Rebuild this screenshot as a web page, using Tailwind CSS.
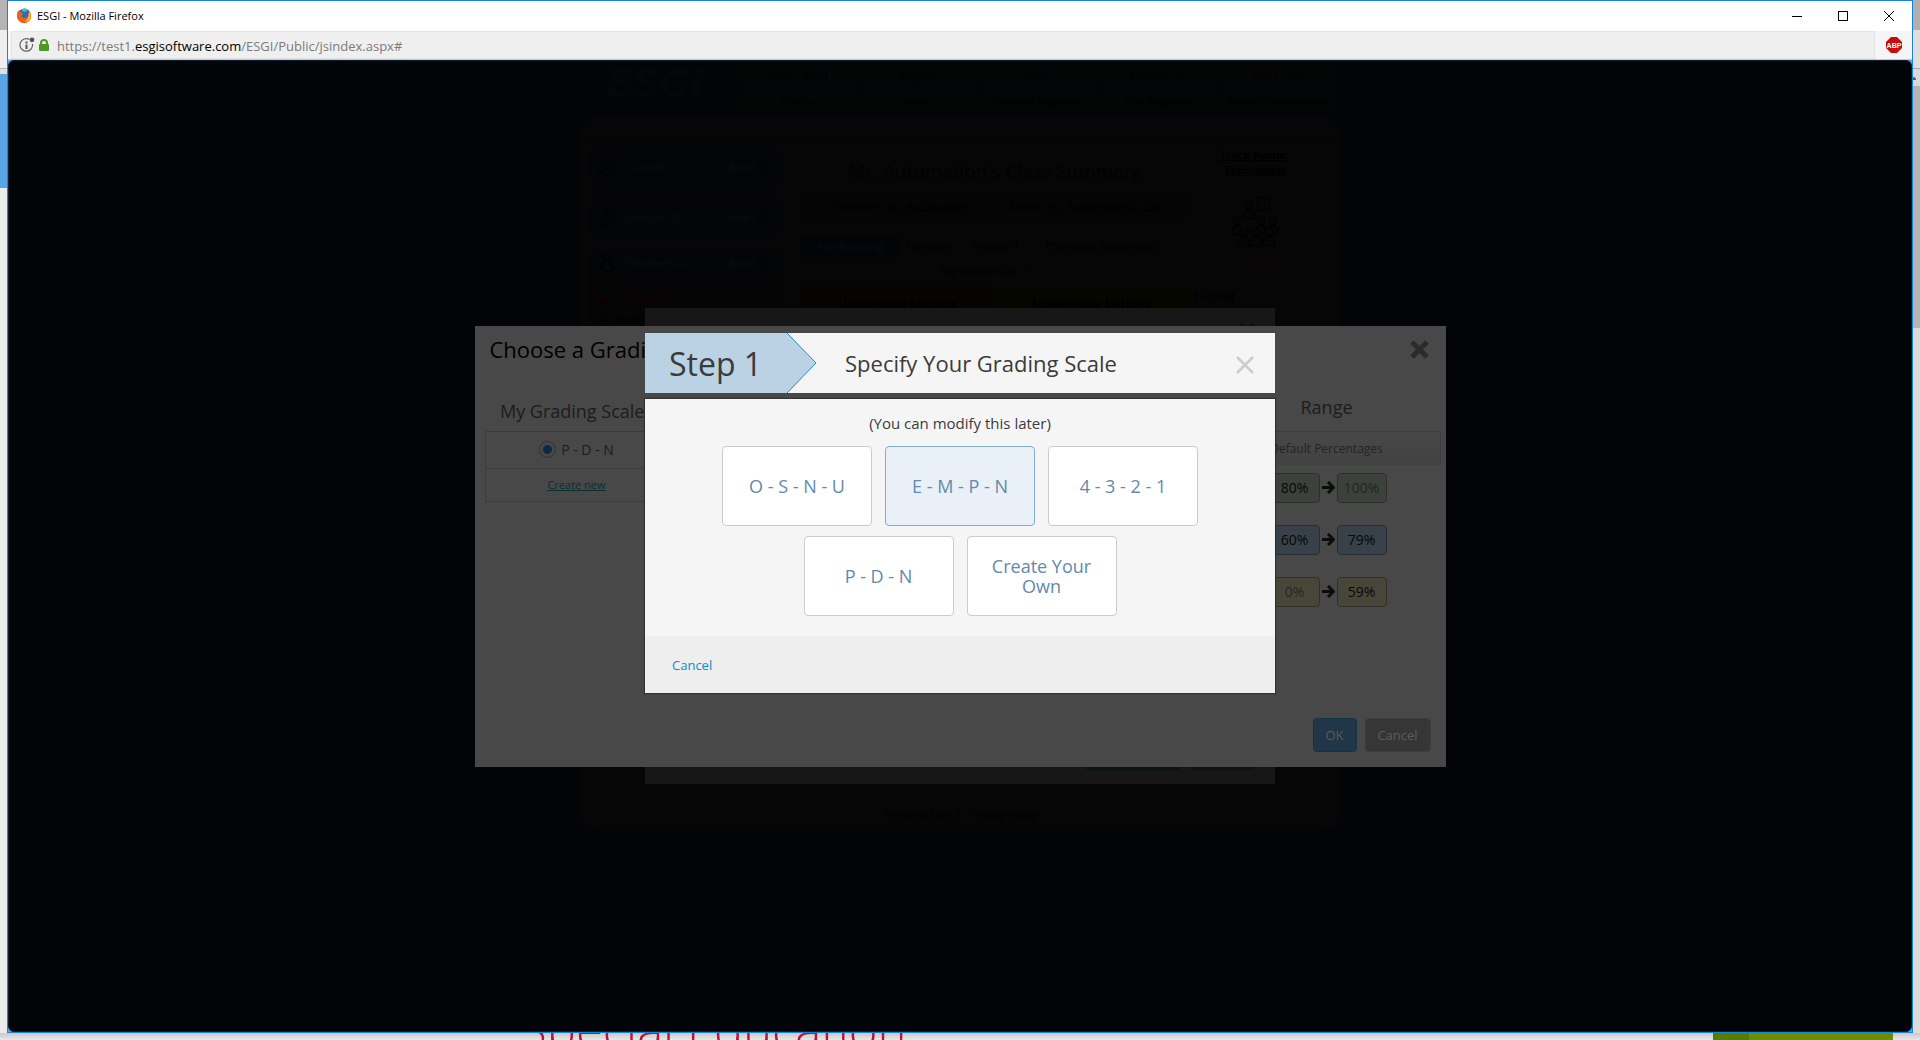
<!DOCTYPE html>
<html lang="en">
<head>
<meta charset="utf-8">
<title>ESGI - Mozilla Firefox</title>
<script src="https://cdn.jsdelivr.net/npm/@tailwindcss/browser@4"></script>
</head>
<body class="grid h-screen grid-cols-[7px_1fr_7px] grid-rows-[1fr_7px] overflow-hidden bg-[#dcdcdc] font-['Open_Sans',sans-serif]">

<!-- desktop: left edge -->
<div class="flex flex-col bg-[#ececec]">
  <div class="h-[30px] bg-[#b4b4b4]"></div>
  <div class="h-[38px] bg-[#efefef]"></div>
  <div class="h-px bg-[#b5b5b5]"></div>
  <div class="h-[5px] bg-[#e0e0e0]"></div>
  <div class="h-[114px] bg-[#5aa5e3]"></div>
</div>

<!-- browser window -->
<div class="flex min-w-0 flex-col border border-[#1883d7] bg-[#5aa5e3]">
  <div class="flex h-[30px] shrink-0 items-center bg-white pl-2">
    <svg class="size-4" viewBox="0 0 16 16" aria-hidden="true">
      <circle cx="8" cy="8" r="7" fill="#e0531b"/>
      <circle cx="8.500" cy="6" r="5.500" fill="#2a6fb4"/>
      <path d="M6 1.500Q9-.5 12 2L9 4 6 3z" fill="#4cb8e8"/>
      <path d="M1 5Q2 2 4 2Q3 4 6 5Q8 6 6 7Q5 9 8 10Q12 10 12 7L13 3Q16 6 15 10Q12 16 7 15Q1 14 1 5z" fill="#e8641c"/>
      <path d="M13 4Q16 7 14 11Q12 14 8 14Q13 12 13 4z" fill="#fcc233"/>
    </svg>
    <h1 class="ml-[5px] text-[11px] leading-4 text-black">ESGI - Mozilla Firefox</h1>
    <div class="ml-auto flex h-full items-center">
      <button class="flex h-full w-[46px] items-center justify-center" aria-label="Minimize"><svg class="size-[10px]" viewBox="0 0 10 10"><path d="M0 5.500h10" stroke="#000"/></svg></button>
      <button class="flex h-full w-[46px] items-center justify-center" aria-label="Maximize"><svg class="size-[10px]" viewBox="0 0 10 10"><rect x=".5" y=".5" width="9" height="9" fill="none" stroke="#000"/></svg></button>
      <button class="flex h-full w-[46px] items-center justify-center" aria-label="Close window"><svg class="size-[10px]" viewBox="0 0 10 10"><path d="M0 0l10 10M10 0L0 10" stroke="#000"/></svg></button>
    </div>
  </div>
  <div class="flex h-[29px] shrink-0 border-b border-[#c6c6c6] bg-[#f5f5f5] pl-[3px]">
    <div class="flex flex-1 items-center border border-[#e3e3e3] bg-[#efefef] pl-[7px]">
      <svg class="size-4" viewBox="0 0 16 16" aria-hidden="true"><path d="M10.500 2.500A6.300 6.300 0 1 0 13.500 7" fill="none" stroke="#666" stroke-width="1.200"/><circle cx="13" cy="2.800" r="2.400" fill="#555"/><path d="M7.500 4.500v2M7.500 7.500v4.500" stroke="#555" stroke-width="2"/></svg>
      <svg class="ml-1 h-3 w-[10px]" viewBox="0 0 10 12" aria-hidden="true"><rect y="5" width="10" height="7" rx="1" fill="#4d9a26"/><path d="M2 6V4a3 3 0 0 1 6 0v2" fill="none" stroke="#4d9a26" stroke-width="2"/></svg>
      <a href="#" class="ml-2 pt-[2px] text-[13px] leading-5 text-[#7b7b7b]">https://test1.<span class="text-black">esgisoftware.com</span>/ESGI/Public/jsindex.aspx#</a>
    </div>
    <button class="flex w-[37px] items-center justify-center" aria-label="Adblock Plus">
      <svg class="size-4" viewBox="0 0 16 16"><path d="M5 0h6l5 5v6l-5 5H5l-5-5V5z" fill="#c70d0e"/><text x="8" y="11" text-anchor="middle" font-size="7" font-weight="700" font-family="Liberation Sans, sans-serif" fill="#fff">ABP</text></svg>
    </button>
  </div>

  <!-- page content -->
  <div class="relative min-h-0 flex-1 overflow-hidden rounded-md border border-[#0d2030] bg-[#020407] text-[11px] leading-4 text-[#010101]">

    <div class="mx-auto w-[760px] pt-1">
      <div class="flex h-[52px] justify-between pr-[5px] pl-[26px]">
        <div class="font-['DejaVu_Sans'] text-[38px] leading-9 font-bold text-[#040608] italic">ESGI</div>
        <nav class="grid h-[46px] grid-cols-5 gap-x-[5px] gap-y-[7px] text-center">
          <a href="#" class="h-[19px] w-[115px] rounded bg-[#040505] leading-5">2017 - 2018</a>
          <a href="#" class="h-[19px] w-[115px] rounded bg-[#040505] leading-5">Logout</a>
          <a href="#" class="h-[19px] w-[115px] rounded bg-[#040505] leading-5">Help</a>
          <a href="#" class="h-[19px] w-[115px] rounded bg-[#040505] leading-5">Contact Us</a>
          <a href="#" class="h-[19px] w-[115px] rounded bg-[#040505] leading-5"><i class="mr-2 text-sm leading-5 text-[#050102]">CMT</i>Go</a>
          <a href="#" class="h-[19px] w-[115px] rounded bg-[#040505] leading-5">Profile</a>
          <a href="#" class="h-[19px] w-[115px] rounded bg-[#040505] leading-5">Home</a>
          <a href="#" class="h-[19px] w-[115px] rounded bg-[#040505] leading-5">Student Explorer</a>
          <a href="#" class="h-[19px] w-[115px] rounded bg-[#040505] leading-5">Test Explorer</a>
          <a href="#" class="h-[19px] w-[115px] rounded bg-[#040505] leading-5">Parent Conferencer</a>
        </nav>
      </div>
      <main class="flex h-[714px] flex-col rounded-[20px] bg-[#060606]">
        <div class="h-[20px] shrink-0 border-b border-[#030303]"></div>
        <div class="flex flex-1 pr-5 pl-[10px]">
          <aside class="flex w-[190px] flex-col gap-[10px] pt-[10px] text-[#060a0e]">
            <div class="flex h-10 items-center gap-2 rounded-xl bg-[#030508] px-2 font-bold">
              <svg class="size-5" viewBox="0 0 20 20" fill="none" stroke="#000"><circle cx="10" cy="4" r="3"/><circle cx="4" cy="12" r="3"/><circle cx="15" cy="12" r="3"/><path d="M1 19q3-6 6 0M12 19q3-6 6 0M7 11q3-6 6 0"/></svg>
              <span>Classes (1)</span><a href="#" class="ml-auto">Add</a><span class="size-[14px] bg-[#010504]"></span>
            </div>
            <div class="flex h-10 items-center gap-2 rounded-xl bg-[#030508] px-2 font-bold">
              <svg class="size-5" viewBox="0 0 20 20" fill="none" stroke="#000"><circle cx="12" cy="4" r="3"/><circle cx="6" cy="10" r="3"/><path d="M2 19q4-9 8 0zM9 14q4-9 8 0z"/></svg>
              <span>Groups (0)</span><a href="#" class="ml-auto">Add</a><span class="size-[14px] bg-[#010504]"></span>
            </div>
            <div class="rounded-xl bg-[#050505]">
              <div class="flex h-[31px] items-center gap-2 rounded-t-xl bg-[#030508] px-2 font-bold">
                <svg class="size-5" viewBox="0 0 20 24" fill="none" stroke="#000" stroke-width="1.500"><circle cx="9" cy="5" r="4"/><path d="M2 20Q2 9 9 9T16 20Q9 25 2 20z"/></svg>
                <span>Students (4)</span><a href="#" class="ml-auto">Add</a><span class="size-[14px] bg-[#010504]"></span>
              </div>
              <ul class="px-[10px] pt-[14px] leading-[18px] text-[#010101]">
                <li class="flex items-center gap-2 font-bold text-[#0c0101]"><span class="size-[7px] bg-[#0a0000]"></span>All Students</li>
                <li class="flex items-center gap-2"><span class="size-[6px] border border-[#010101]"></span>Rocky</li>
              </ul>
            </div>
          </aside>
          <section class="ml-5 flex w-[389px] flex-col pt-5">
            <h2 class="text-center text-[19px] leading-7 text-[#000203]">Mr. Automation's Class Summary</h2>
            <div class="mt-2 flex h-[26px] items-center justify-between bg-[#050505] pr-6 pl-8">
              <span><b>Teacher:</b> <a href="#" class="ml-1 underline">Mr. Automation</a></span>
              <span><b>Class:</b> <a href="#" class="ml-1 underline">Mr. Automation's Class</a></span>
            </div>
            <div class="mt-4 grid h-[22px] grid-cols-[99px_61px_70px_1fr] items-center pr-[18px] text-center">
              <a href="#" class="bg-[#020408] leading-[22px] font-bold text-[#060a10]">Pre-Reading</a><a href="#">Pre-Math</a><a href="#">Phonics 1</a><a href="#">Phonemic Awareness</a>
            </div>
            <div class="mt-1 h-[22px] pr-[18px] text-center leading-5"><a href="#">Sight Words Gr. 1</a></div>
            <div class="mt-1 grid h-8 grid-cols-2 text-center text-[13px] leading-8 font-bold"><a href="#" class="bg-[#070300] text-black">Uppercase Letters</a><a href="#" class="bg-[#060600] text-black">Lowercase Letters</a></div>
          </section>
          <section class="flex flex-1 flex-col items-center pt-[10px] text-center">
            <a href="#" class="w-[90px] leading-[15px] font-bold text-black underline">Track Name: Traditional</a>
            <svg class="mt-5 h-[50px] w-[48px]" viewBox="0 0 48 50" fill="#060505" stroke="#000"><rect x="26" y="1" width="13" height="13"/><circle cx="18" cy="8" r="4"/><path d="M12 22q0-10 6-10t6 10z"/><circle cx="6" cy="24" r="4"/><circle cx="30" cy="24" r="4"/><circle cx="42" cy="24" r="4"/><path d="M1 38q0-10 5-10t5 10zM25 38q0-10 5-10t5 10zM37 38q0-10 5-10t5 10z"/><circle cx="13" cy="35" r="4"/><circle cx="25" cy="35" r="4"/><circle cx="38" cy="35" r="4"/><path d="M7 49q0-10 6-10t6 10zM19 49q0-10 6-10t6 10zM32 49q0-10 6-10t6 10z"/></svg>
            <strong class="mt-[6px] text-[13px] text-[#080703]">Students 4</strong>
            <strong class="mt-5 self-start pl-1 font-['Liberation_Serif'] text-[13px]">Legend</strong>
          </section>
        </div>
        <footer class="pb-[9px] text-center"><a href="#">Terms of Use</a> &nbsp;|&nbsp; <a href="#">Privacy Policy</a></footer>
      </main>
    </div>

    <!-- grade dialog, furthest back -->
    <div class="absolute inset-0 flex items-center justify-center">
      <section class="flex h-[476px] w-[630px] flex-col justify-between bg-[#171717] px-5 py-[14px]">
        <div class="flex items-start justify-between text-[20px] leading-6 text-[#030303]"><h2>Choose Grade Range</h2><svg class="mt-[1px] size-4" viewBox="0 0 16 16"><path d="M1 1l14 14M15 1L1 15" stroke="#101010" stroke-width="4"/></svg></div>
        <div class="flex justify-end gap-[10px] text-[13px]"><button class="h-[34px] w-[96px] rounded bg-[#08131a]">Run Report</button><button class="h-[34px] w-[64px] rounded bg-[#111]">Cancel</button></div>
      </section>
    </div>

    <!-- grading scale dialog -->
    <div class="absolute inset-0 flex items-center justify-center">
      <section class="flex h-[441px] w-[971px] flex-col bg-[#484848]">
        <header class="flex items-start justify-between pt-2 pr-[17px] pb-px pl-[15px]">
          <h2 class="text-[22px] leading-[30px] text-black">Choose a Grading Scale</h2>
          <button class="pt-[6px]" aria-label="Close dialog"><svg class="size-[19px]" viewBox="0 0 19 19"><path d="M2 2l15 15M17 2L2 17" stroke="#2b2b2b" stroke-width="5"/></svg></button>
        </header>
        <div class="flex flex-1 justify-between pr-[5px] pl-[10px]">
          <div class="w-[184px] pt-[34px] text-center text-[#1c1c1c]">
            <h3 class="text-[18px] leading-6 whitespace-nowrap">My Grading Scales</h3>
            <div class="mt-2 border border-[#3c3c3c]">
              <label class="flex h-9 items-center justify-center gap-[5px] text-sm"><input type="radio" name="scale" checked class="m-0 size-[17px] appearance-none rounded-full border border-[#303036] bg-[#0d2a44] bg-clip-content p-[3px]">P - D - N</label>
              <div class="flex h-[33px] items-center justify-center border-t border-[#3c3c3c] text-[11px]"><a href="#" class="text-[#0b2c30] underline">Create new</a></div>
            </div>
          </div>
          <div class="w-[228px] pt-[30px] text-center">
            <h3 class="text-[18px] leading-6 text-[#1c1c1c]">Range</h3>
            <div class="mt-3 h-[34px] border border-b-0 border-[#3e3e3e] bg-linear-to-b from-[#484848] to-[#424242] text-xs leading-[33px] text-[#242424]">Default Percentages</div>
            <div class="mt-2 flex flex-col items-center gap-[22px] pl-[3px] text-sm text-[#080808]">
              <div class="flex items-center gap-[2px]"><input aria-label="P from" value="80%" class="h-[30px] w-[50px] rounded-sm border border-[#2c302c] bg-[#3c423b] text-center"><svg class="size-[13px]" viewBox="0 0 13 13"><path d="M0 6.500h10M6 1l5.500 5.500L6 12" fill="none" stroke="#0c0c0c" stroke-width="3"/></svg><input aria-label="P to" value="100%" disabled class="h-[30px] w-[50px] rounded-sm border border-[#2c302c] bg-[#3c423b] text-center text-[#22251f]"></div>
              <div class="flex items-center gap-[2px]"><input aria-label="D from" value="60%" class="h-[30px] w-[50px] rounded-sm border border-[#2a2d30] bg-[#384149] text-center"><svg class="size-[13px]" viewBox="0 0 13 13"><path d="M0 6.500h10M6 1l5.500 5.500L6 12" fill="none" stroke="#0c0c0c" stroke-width="3"/></svg><input aria-label="D to" value="79%" class="h-[30px] w-[50px] rounded-sm border border-[#2a2d30] bg-[#384149] text-center"></div>
              <div class="flex items-center gap-[2px]"><input aria-label="N from" value="0%" disabled class="h-[30px] w-[50px] rounded-sm border border-[#302f28] bg-[#484638] text-center text-[#282720]"><svg class="size-[13px]" viewBox="0 0 13 13"><path d="M0 6.500h10M6 1l5.500 5.500L6 12" fill="none" stroke="#0c0c0c" stroke-width="3"/></svg><input aria-label="N to" value="59%" class="h-[30px] w-[50px] rounded-sm border border-[#302f28] bg-[#484638] text-center"></div>
            </div>
          </div>
        </div>
        <footer class="flex justify-end gap-2 pr-[15px] pb-[15px] text-[13px] text-[#5c5c5c]">
          <button class="h-[34px] w-11 rounded border border-[#133442] bg-[#213648]">OK</button>
          <button class="h-[34px] w-[66px] rounded border border-[#3e3e3e] bg-[#363636]">Cancel</button>
        </footer>
      </section>
    </div>

    <!-- step dialog, in front -->
    <div class="absolute inset-0 flex items-center justify-center pb-[66px]">
      <section class="flex w-[630px] flex-col gap-[6px] text-[#3b3b3b]">
        <header class="flex h-[60px] items-center bg-[#f5f5f5] pr-[21px]">
          <div class="relative flex h-full w-[172px] items-center">
            <svg class="absolute inset-0 h-full w-full" viewBox="0 0 172 60" aria-hidden="true"><path d="M0 0H142L171 30 142 60H0z" fill="#bad2e4"/><path d="M142 0L171 30 142 60" fill="none" stroke="#1a90cf"/></svg>
            <span class="relative pt-[2px] pl-6 text-[32px] leading-10">Step 1</span>
          </div>
          <h2 class="ml-7 text-[22px] leading-[30px]">Specify Your Grading Scale</h2>
          <button class="ml-auto pt-1" aria-label="Close"><svg class="size-[18px]" viewBox="0 0 18 18"><path d="M1 1l16 16M17 1L1 17" stroke="#ccc" stroke-width="2.500"/></svg></button>
        </header>
        <div class="bg-[#f5f5f5] shadow-[0_0_1px_1px_rgba(0,0,0,0.3)]">
          <p class="pt-[14px] text-center text-[15px] leading-5">(You can modify this later)</p>
          <div class="flex flex-wrap justify-center gap-x-[13px] gap-y-[10px] px-[70px] pt-[13px] pb-5 text-[18px] leading-5 text-[#6489ab]">
            <button class="h-20 w-[150px] rounded border border-[#ccc] bg-white">O - S - N - U</button>
            <button class="h-20 w-[150px] rounded border border-[#83aed1] bg-[#e9f0f7]">E - M - P - N</button>
            <button class="h-20 w-[150px] rounded border border-[#ccc] bg-white">4 - 3 - 2 - 1</button>
            <button class="h-20 w-[150px] rounded border border-[#ccc] bg-white">P - D - N</button>
            <button class="h-20 w-[150px] rounded border border-[#ccc] bg-white px-5">Create Your Own</button>
          </div>
          <footer class="flex h-[57px] items-center bg-[#eee] px-[27px] text-[13px]"><a href="#" class="text-[#0d8ad0]">Cancel</a></footer>
        </div>
      </section>
    </div>
  </div>
</div>

<!-- desktop: right edge -->
<div class="flex flex-col bg-[#dcdcdc]">
  <div class="h-[30px] bg-[#b0b0b0]"></div>
  <div class="h-[38px] bg-[#dedede]"></div>
  <div class="h-px bg-[#a8a8a8]"></div>
  <div class="h-[17px] bg-[#d8d8d8] pt-2"><div class="size-[3px] rounded-tr bg-[#555]"></div></div>
  <div class="h-[242px] bg-[#b5b5b5]"></div>
</div>

<!-- desktop: page behind the bottom edge -->
<div class="col-span-3 flex items-center justify-between overflow-hidden bg-linear-to-b from-[#c9c9c9] to-[#e8e8e8] pr-[27px] pl-5">
  <p class="pb-4 pl-[500px] font-['Open_Sans'] text-[49px] leading-[60px] font-light text-[#b81538]">Special Education</p>
  <div class="flex h-[7px] w-[180px] bg-[#6a9000]"><div class="w-9 bg-[#567c00]"></div></div>
</div>
</body>
</html>
